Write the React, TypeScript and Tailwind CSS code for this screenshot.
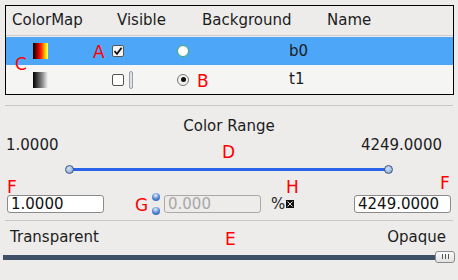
import React from 'react';

const font = { fontFamily: '"DejaVu Sans", "Liberation Sans", sans-serif' };

function Mark({ children, className }: { children: React.ReactNode; className: string }) {
  return (
    <span className={`absolute text-[17px] leading-none text-[#ff0000] ${className}`} style={font}>
      {children}
    </span>
  );
}

function Knob({ className }: { className: string }) {
  return (
    <span
      className={`absolute h-[9px] w-[9px] rounded-full border border-[#3c5a86] bg-[radial-gradient(circle_at_40%_35%,#d4e2f3,#7d9dc7)] ${className}`}
    />
  );
}

export default function App() {
  return (
    <div className="relative h-[280px] w-[458px] overflow-hidden bg-[#edeceb] text-[15px] text-[#1c1c1c]" style={font}>
      {/* layer table */}
      <div className="ml-[5px] mt-[5px] w-[449px] border border-black bg-[#f5f5f4]">
        <div className="flex h-[29px] items-center bg-[#edeceb]">
          <span className="w-[105px] pl-[6px]">ColorMap</span>
          <span className="w-[85px] pl-[6px]">Visible</span>
          <span className="w-[125px] pl-[6px]">Background</span>
          <span className="pl-[6px]">Name</span>
        </div>
        <div className="h-[2px] border-t border-[#cfcecc] bg-[#edeceb]" />
        <div className="flex h-[28px] items-center bg-[#4ea6f8]">
          <span className="ml-[27px] h-[16px] w-[15px] bg-[linear-gradient(to_right,#000,#c00000_35%,#ff2a00_55%,#ffe000_85%,#ffff60)]" />
          <span className="ml-[64px] flex h-[12px] w-[12px] items-center justify-center rounded-[2px] border border-[#555] bg-[#f5f5f5]">
            <svg width="10" height="10" viewBox="0 0 10 10">
              <path d="M1.5 5.2 L4 7.8 L8.6 1.8" fill="none" stroke="#111" strokeWidth="1.8" />
            </svg>
          </span>
          <span className="ml-[53px] h-[12px] w-[12px] rounded-full border border-[#3aa86a] bg-white" />
          <span className="ml-[100px]">b0</span>
        </div>
        <div className="flex h-[29px] items-center">
          <span className="ml-[27px] h-[16px] w-[15px] bg-[linear-gradient(to_right,#000,#7a7a7a_55%,#f4f4f4)]" />
          <span className="ml-[64px] h-[12px] w-[12px] rounded-[2px] border border-[#555] bg-white" />
          <span className="ml-[5px] h-[18px] w-[4px] rounded-[2px] border border-[#9aa0a8] bg-[#dfe3e8]" />
          <span className="ml-[44px] flex h-[12px] w-[12px] items-center justify-center rounded-full border border-[#777] bg-[#f2f2f2]">
            <span className="h-[5px] w-[5px] rounded-full bg-[#111]" />
          </span>
          <span className="ml-[100px]">t1</span>
        </div>
      </div>

      <div className="mx-[5px] mt-[10px] border-t border-[#c8c7c5]" />

      {/* color range */}
      <div className="mt-[13px] text-center leading-none">Color Range</div>
      <div className="mt-[4px] flex justify-between px-[6px] leading-none">
        <span>1.0000</span>
        <span className="pr-[10px]">4249.0000</span>
      </div>
      <div className="relative mx-[70px] mt-[15px] h-[3px] w-[318px] bg-[#2a62ea]">
        <Knob className="left-[-5px] top-[-3px]" />
        <Knob className="right-[-5px] top-[-3px]" />
      </div>

      <div className="mt-[22px] flex items-center px-[7px]">
        <input
          readOnly
          value="1.0000"
          className="h-[18px] w-[97px] rounded-[3px] border border-[#8a8a8a] bg-white px-[3px] text-[15px] text-[#111] outline-none"
          style={font}
        />
        <span className="ml-[48px] flex flex-col gap-[6px]">
          <span className="h-[8px] w-[8px] rounded-full bg-[radial-gradient(circle_at_45%_30%,#e4eefb,#4a7fd0_55%,#2f5aa8)]" />
          <span className="h-[8px] w-[8px] rounded-full bg-[radial-gradient(circle_at_45%_30%,#e4eefb,#4a7fd0_55%,#2f5aa8)]" />
        </span>
        <input
          readOnly
          value="0.000"
          className="ml-[4px] h-[18px] w-[97px] rounded-[3px] border border-[#aaa9a7] bg-[#edeceb] px-[3px] text-[15px] text-[#a8a8a8] outline-none"
          style={font}
        />
        <span className="ml-[10px]">%</span>
        <span className="ml-[1px] flex h-[8px] w-[8px] items-center justify-center bg-[#111]">
          <svg width="6" height="6" viewBox="0 0 6 6">
            <path d="M0.5 0.5 L5.5 5.5 M5.5 0.5 L0.5 5.5" stroke="#ddd" strokeWidth="1" />
          </svg>
        </span>
        <input
          readOnly
          value="4249.0000"
          className="ml-auto h-[18px] w-[97px] rounded-[3px] border border-[#8a8a8a] bg-white px-[3px] text-[15px] text-[#111] outline-none"
          style={font}
        />
      </div>

      <div className="mx-[5px] mt-[4px] border-t border-[#c8c7c5]" />

      {/* opacity */}
      <div className="mt-[9px] flex justify-between pl-[10px] pr-[12px] leading-none">
        <span>Transparent</span>
        <span>Opaque</span>
      </div>
      <div className="relative ml-[3px] mt-[10px] h-[5px] w-[434px] bg-[#3d5068]">
        <span className="absolute left-[432px] top-[-4px] flex h-[12px] w-[20px] items-center justify-center gap-[2px] rounded-[3px] border border-[#8a8a8a] bg-[linear-gradient(#fafafa,#e2e2e2)]">
          <span className="h-[5px] w-px bg-[#555]" />
          <span className="h-[5px] w-px bg-[#555]" />
          <span className="h-[5px] w-px bg-[#555]" />
        </span>
      </div>

      {/* annotation letters */}
      <Mark className="left-[93px] top-[44px]">A</Mark>
      <Mark className="left-[15px] top-[56px]">C</Mark>
      <Mark className="left-[197px] top-[73px]">B</Mark>
      <Mark className="left-[222px] top-[144px]">D</Mark>
      <Mark className="left-[7px] top-[179px]">F</Mark>
      <Mark className="left-[440px] top-[175px]">F</Mark>
      <Mark className="left-[135px] top-[197px]">G</Mark>
      <Mark className="left-[286px] top-[179px]">H</Mark>
      <Mark className="left-[225px] top-[231px]">E</Mark>
    </div>
  );
}
